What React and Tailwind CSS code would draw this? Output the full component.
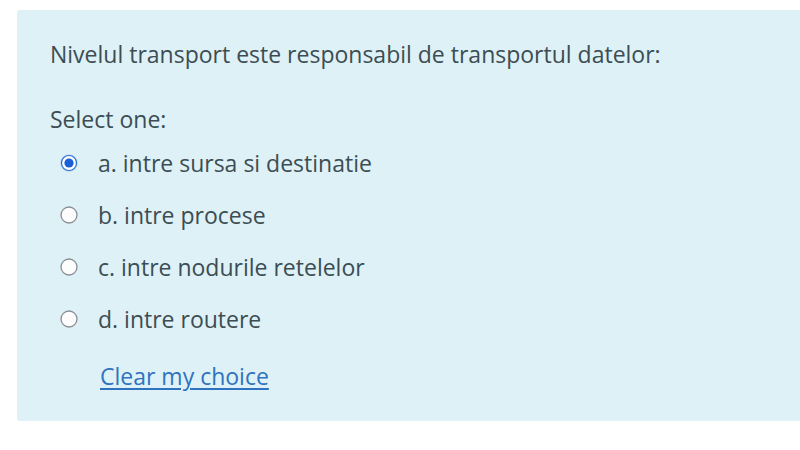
import React from "react";

function Radio({ checked }) {
  return (
    <svg width="20" height="20" viewBox="0 0 20 20" className="shrink-0">
      {checked ? (
        <>
          <circle cx="10" cy="10" r="9" fill="#c3dcf6" />
          <circle cx="10" cy="10" r="7.5" fill="#ffffff" stroke="#2a6fd6" strokeWidth="1.2" />
          <circle cx="10" cy="10" r="4.6" fill="#1a5fd8" />
        </>
      ) : (
        <circle cx="10" cy="10" r="8" fill="#fdfdfd" stroke="#8a8f94" strokeWidth="1.3" />
      )}
    </svg>
  );
}

const options = [
  { label: "a. intre sursa si destinatie", checked: true },
  { label: "b. intre procese" },
  { label: "c. intre nodurile retelelor" },
  { label: "d. intre routere" },
];

export default function App() {
  return (
    <div
      className="w-[800px] h-[450px] bg-white pt-[10px] pl-[17px] overflow-hidden"
      style={{ fontFamily: "'Open Sans', 'Noto Sans', sans-serif" }}
    >
      <div className="h-[411px] bg-[#def1f7] rounded-l-[3px] pl-[33px] pt-[29px] text-[#3c4d53] text-[23px]">
        <div className="leading-[30px]">Nivelul transport este responsabil de transportul datelor:</div>
        <div className="leading-[30px] mt-[35px]">Select one:</div>
        <div className="mt-[14px] flex flex-col gap-[22px]">
          {options.map((o) => (
            <label key={o.label} className="flex items-center gap-[19px] pl-[9px] leading-[30px]">
              <Radio checked={o.checked} />
              <span>{o.label}</span>
            </label>
          ))}
        </div>
        <div className="mt-[27px] pl-[50px] leading-[30px]">
          <a href="#" className="text-[#2f73c0] underline underline-offset-[3px]">Clear my choice</a>
        </div>
      </div>
    </div>
  );
}
